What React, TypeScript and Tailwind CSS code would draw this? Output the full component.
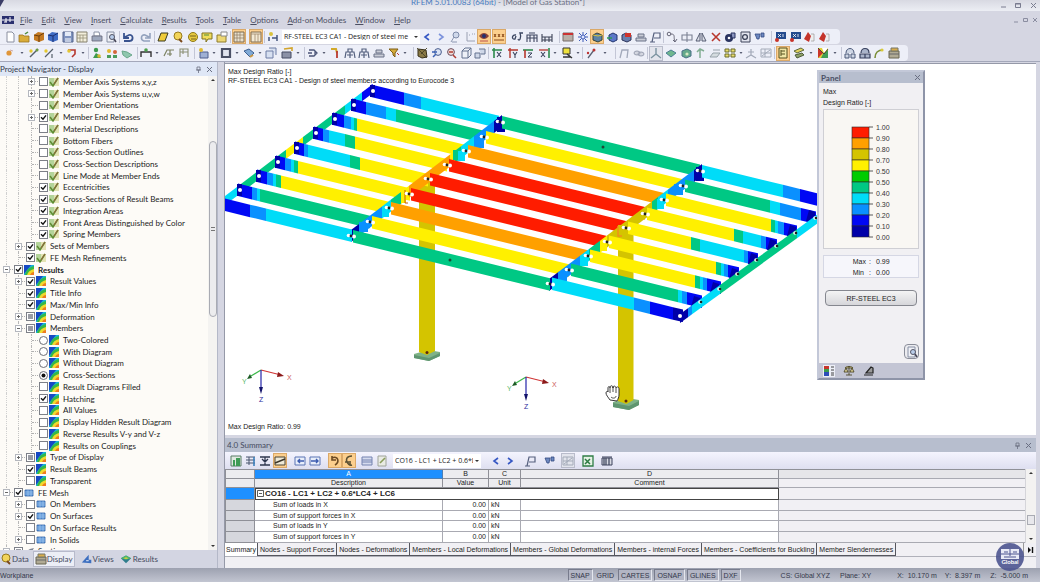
import React from "react";

type Kids = { children?: React.ReactNode };

/* ---------- toolbar glyphs, drawn on a 14 x 14 grid ---------- */

const glyphs: Record<string, React.ReactNode> = {
  doc: <path d="M4 2h5l2 2v8H4z" fill="#fff" stroke="#8a8fa0" />,
  open: <><path d="M2 5h4l1 1h5v6H2z" fill="#d9ac3a" stroke="#9a7420" strokeWidth=".8" /><path d="M8 4l3-2" stroke="#4d8c3c" strokeWidth="1.5" /></>,
  boxO: <><path d="M2 5l4-3 6 1v7l-5 2-5-2z" fill="#c47a22" /><path d="M2 5l5 1v6M7 6l5-3" stroke="#6d3d0c" fill="none" /></>,
  boxB: <><path d="M2 5l4-3 6 1v7l-5 2-5-2z" fill="#3f6cc4" /><path d="M2 5l5 1v6M7 6l5-3" stroke="#1b2f70" fill="none" /></>,
  save: <><path d="M2 2h10v10H2z" fill="#7f93bf" stroke="#56658c" /><path d="M4 2h6v4H4z" fill="#e4eaf6" /><path d="M4 8h6v4H4z" fill="#c0cae0" /></>,
  table: <><path d="M2 2h10v10H2z" fill="#f3efdc" stroke="#85806c" /><path d="M2 5h10M5 5v7M8 5v7M2 8h10" stroke="#98927a" strokeWidth=".8" /></>,
  print: <><path d="M4 2h5l1 4H4z" fill="#fff" stroke="#8890a4" /><path d="M2 6h10v5H2z" fill="#9ea8bd" stroke="#667" strokeWidth=".8" /></>,
  preview: <><path d="M3 2h7v10H3z" fill="#eef0f6" stroke="#8890a4" /><circle cx="8" cy="7" r="2.5" fill="#b9cdea" stroke="#556" /><path d="M10 9l2 3" stroke="#445" strokeWidth="1.5" /></>,
  undo: <path d="M3 11h6c4-1 3-7-1-6L4 7M3 3v5h5" fill="none" stroke="#39538f" strokeWidth="1.8" />,
  redo: <path d="M11 11H5c-4-1-3-7 1-6l4 2M11 3v5H6" fill="none" stroke="#93a2bd" strokeWidth="1.6" />,
  para: <path d="M5 3h7l-3 8H2z" fill="#efcb3a" stroke="#3a3a20" />,
  bubble: <><circle cx="7" cy="6" r="4" fill="#f2d45a" stroke="#977a1d" /><path d="M8 9l3 3" stroke="#7b4a1d" strokeWidth="2" /></>,
  globe: <><circle cx="7" cy="7" r="4.5" fill="#e7c93f" stroke="#8f7a18" /><path d="M4 6h6M5 9h5" stroke="#76631a" /></>,
  note: <><path d="M2 3h10v6H8l-2 3V9H2z" fill="#f0dc5c" stroke="#7e7220" /><path d="M4 5h5" stroke="#4e8a3a" /></>,
  folder: <><path d="M2 5h9v7H2z" fill="#edd774" stroke="#8e7d2c" /><path d="M6 2h6v4H6z" fill="#fff" stroke="#888" /></>,
  grid: <><path d="M2 2h10v10H2z" fill="#e9e2d0" stroke="#7f6a4f" /><path d="M5 2v10M8 2v10M2 5h10M2 8h10" stroke="#8f7a60" strokeWidth=".7" /></>,
  cols: <><path d="M2 2h10v10H2z" fill="#f3ead4" stroke="#7f6a4f" /><path d="M2 4h10M6 4v8M9 4v8" stroke="#a0896a" strokeWidth=".8" /></>,
  steps: <><circle cx="5" cy="4" r="2" fill="#d8c23c" /><path d="M3 7v4M6 8h5M11 5v6" stroke="#43557d" strokeWidth="1.5" /></>,
  back: <path d="M9 4L5 7l4 3" fill="none" stroke="#3557c4" strokeWidth="1.6" />,
  fwd: <path d="M5 4l4 3-4 3" fill="none" stroke="#7d93dc" strokeWidth="1.6" />,
  fwdD: <path d="M5 4l4 3-4 3" fill="none" stroke="#3557c4" strokeWidth="1.6" />,
  lens: <><circle cx="8" cy="5" r="3" fill="#cfd8ea" stroke="#7d8aa8" /><path d="M3 12l3-5M4 12h5" stroke="#8b96b0" /></>,
  axis: <path d="M4 2v9h8M6 5h1M9 4h1M11 4h1" fill="none" stroke="#9aa0b2" />,
  eye: <><path d="M2 6c3-4 7-4 10 0-3 4-7 4-10 0z" fill="#8b4438" /><circle cx="7" cy="6" r="2" fill="#25316f" /><path d="M3 11h8" stroke="#b55" /></>,
  xxx: <path d="M2 4l2 3M4 4L2 7M6 4l2 3M8 4L6 7M10 4l2 3M12 4l-2 3M2 10h10" stroke="#8a4a1a" />,
  wave: <path d="M6 5c-4-1-5 5-1 4l1-3M8 9c1 3 4-1 2-6h3" fill="none" stroke="#3a4560" strokeWidth="1.3" />,
  frame: <path d="M2 12V5h10v7M2 8h10M5 5v7M9 5v7M4 3h6" fill="none" stroke="#3e4660" strokeWidth="1.1" />,
  rail: <path d="M2 12V4M12 12V4M2 7h10M2 10h10M5 7v5M9 7v5" fill="none" stroke="#3c4256" strokeWidth="1.1" />,
  chipR: <><path d="M2 3h10v8H2z" fill="#b9b0a8" stroke="#776f6a" /><path d="M2 4h10" stroke="#c33" strokeWidth="2" /></>,
  burst: <><path d="M7 2v10M2 7h10M3 3l8 8M11 3l-8 8" stroke="#3c5ab8" /><circle cx="7" cy="7" r="2" fill="#dfe6ff" stroke="#4b66bd" /></>,
  cubeG: <><path d="M3 5l4-2 5 2v5l-4 2-5-2z" fill="#5d83a6" stroke="#34423a" /><path d="M3 5l5 1 4-1" stroke="#d7c33c" fill="none" /></>,
  cubeB: <><path d="M4 5l4-2 4 2v5l-4 2-4-2z" fill="#5b78c8" stroke="#22346e" /><path d="M2 8h5" stroke="#2b9b54" strokeWidth="1.5" /></>,
  cubeR: <><path d="M3 5l4-2 5 2v5l-4 2-5-2z" fill="#6a7fae" stroke="#2c345c" /><path d="M6 3h6v4H6z" fill="#d0342c" /></>,
  stack: <path d="M4 4h6v3H4zM2 8h10v3H2z" fill="#c9ccd6" stroke="#6b7288" />,
  flag: <path d="M4 12L6 3h6v5H6M2 12h5" fill="none" stroke="#56607e" strokeWidth="1.2" />,
  link: <><circle cx="4" cy="4" r="1.8" fill="none" stroke="#667" /><path d="M6 4c5 0 2 4 4 7M8 10l2 2 2-3" stroke="#667" fill="none" /></>,
  phi: <path d="M2 5h10v5H2zM7 2v10" fill="none" stroke="#7b8092" strokeWidth="1.1" />,
  mirror: <path d="M6 3L2 11h4zM8 3l4 8H8z" fill="#dcdfe8" stroke="#565d72" />,
  cross: <path d="M3 3l8 8M11 3l-8 8" stroke="#b8382e" strokeWidth="1.6" />,
  badge: <><circle cx="6" cy="8" r="4" fill="#2a3460" /><path d="M8 3h4v5H9z" fill="#8c96c0" stroke="#26305e" /><circle cx="6" cy="8" r="1.3" fill="#fff" /></>,
  doc2: <><path d="M3 2h9v10H3z" fill="#e2e4ee" stroke="#3c4258" /><circle cx="7" cy="7" r="2.4" fill="none" stroke="#3c4258" strokeWidth="1.3" /></>,
  plug: <><path d="M3 4h5l-1 5H5zM9 3h3v4H9z" fill="#6d88c0" stroke="#334a82" strokeWidth=".8" /></>,
  xyB: <><path d="M3 2h10v7H3z" fill="#234a8e" /><path d="M5 4l3 3M8 4L5 7M10 4v3" stroke="#fff" strokeWidth=".8" /><circle cx="4" cy="10" r="2" fill="#c8332b" /></>,
  runR: <><path d="M6 2l3 4-2 6-5-3z" fill="#c4332a" /><path d="M9 4h3v7H9" fill="#eee" stroke="#999" strokeWidth=".7" /></>,
  dotO: <><circle cx="6" cy="7" r="2.6" fill="#e0963a" /><path d="M7 4l3 1" stroke="#caa" /></>,
  line: <><path d="M3 11l8-8" stroke="#56606a" strokeWidth="1.5" /><circle cx="4" cy="5" r="1.7" fill="#e5c92f" /><circle cx="10" cy="4" r="1.5" fill="#6c9c40" /></>,
  lineI: <><path d="M3 11l8-8M10 8v4" stroke="#56606a" strokeWidth="1.2" /><circle cx="4" cy="5" r="1.7" fill="#e5c92f" /></>,
  shape: <><path d="M3 4h7v4l-3 3" fill="none" stroke="#b6382e" strokeWidth="1.6" /><circle cx="4" cy="5" r="1.8" fill="#e3c531" /></>,
  person: <><circle cx="6" cy="4" r="2.2" fill="#3d9a4e" /><path d="M3 12l3-5 3 2 2 3z" fill="#3d9a4e" /><circle cx="9" cy="10" r="1.8" fill="#d8b72f" /></>,
  nodes: <><path d="M2 9h4v3H2zM8 9h4v3H8z" fill="#4b9b5b" /><circle cx="4" cy="5" r="2" fill="#e3b92f" /><circle cx="10" cy="6" r="2" fill="#d4653a" /></>,
  leaf: <path d="M2 5l5 1 5 3-5 3-4-3z" fill="#8fc7ae" stroke="#6ba88c" />,
  span: <><path d="M2 11V6h10v5" fill="none" stroke="#333" strokeWidth="1.4" /><circle cx="7" cy="4" r="1.8" fill="#4da04c" /></>,
  dim: <path d="M2 10l3-6h7M5 8h5M8 4v6" fill="none" stroke="#7d8262" strokeWidth="1.2" />,
  wrap: <path d="M3 11V3h8v8M3 6h8M6 3v5" fill="none" stroke="#8c8f74" strokeWidth="1.1" />,
  load: <><path d="M4 6h8v6H4z" fill="#9fb0d4" stroke="#4f5f8d" /><circle cx="5" cy="4" r="2" fill="#e0bc36" /></>,
  hole: <path d="M3 3h8v8H3z" fill="#dfe3ee" stroke="#4a5066" strokeWidth="2.2" />,
  diamond: <><path d="M2 5l5-2 5 4-4 4z" fill="#7fa9d6" stroke="#3d5f90" /><path d="M8 11l3-2" stroke="#c94" strokeWidth="2" /></>,
  copy: <path d="M2 5h7v7H2zM5 2h7v7" fill="#d7e0f1" stroke="#6c7da5" />,
  clap: <><path d="M2 6h9v6H2z" fill="#8b91a6" stroke="#444b63" /><path d="M4 3l8-1v3" stroke="#d2a52d" fill="none" strokeWidth="1.6" /></>,
  gate: <path d="M3 4h5l3 3-3 3H3M2 7h4M9 5v4" fill="none" stroke="#4c5678" strokeWidth="1.3" />,
  pinR: <><path d="M3 3h5l1 4" fill="none" stroke="#d2a92a" strokeWidth="2" /><path d="M9 5v7" stroke="#b8392f" strokeWidth="1.8" /></>,
  tower: <path d="M2 12l1-6h8l1 6M4 9h6M5 6V3h4v3M7 6v6" fill="none" stroke="#54607e" strokeWidth="1.2" />,
  filter: <><path d="M2 3h9L8 7v4L6 9V7z" fill="#d4ab3a" stroke="#7d5c14" /><path d="M10 7l2 2" stroke="#b33" /></>,
  rock: <><path d="M3 3l8 1 1 7-5 1-4-2z" fill="#8a7a45" stroke="#39311b" /><path d="M2 2l10 10M12 2L6 8" stroke="#4a4226" strokeWidth=".9" /></>,
  zin: <><circle cx="8" cy="6" r="3.4" fill="#dbe4f5" stroke="#4a5c8c" /><path d="M2 6h5M3 11l3-3" stroke="#3b62b5" strokeWidth="1.5" /></>,
  zout: <><circle cx="7" cy="6" r="3.4" fill="#f2dcd9" stroke="#6b4c5c" /><path d="M9 9l3 3M5 6h4" stroke="#b33c32" strokeWidth="1.5" /></>,
  cube: <path d="M3 5l3-3h6v7l-3 3H3zM3 5h6v7M9 5l3-3" fill="#eef1f8" stroke="#65728f" />,
  cubes: <path d="M2 7h5v5H2zM6 3h6v5H8" fill="#cfd7e8" stroke="#65728f" />,
  axX: <><path d="M2 4h10M4 2v10" stroke="#2c8a4b" strokeWidth="1.6" /><path d="M7 6l4 5M11 6l-4 5" stroke="#39415c" strokeWidth="1.1" /></>,
  axY: <><path d="M2 4h10M4 2v10" stroke="#b4372d" strokeWidth="1.4" /><path d="M7 6l2 3 2-3M9 9v3" stroke="#39415c" fill="none" strokeWidth="1.1" /></>,
  axZ: <><path d="M2 4h10" stroke="#2c8a4b" strokeWidth="1.6" /><path d="M4 4v8" stroke="#b4372d" strokeWidth="1.6" /><path d="M7 7h4l-4 4h4" stroke="#39415c" fill="none" /></>,
  axN: <><path d="M12 2v10" stroke="#2c8a4b" strokeWidth="1.6" /><path d="M2 4h9" stroke="#b4372d" strokeWidth="1.3" /><path d="M4 6l4 5M8 6l-4 5" stroke="#39415c" strokeWidth="1.1" /></>,
  target: <><path d="M3 2h7v6H3z" fill="#efe23c" stroke="#333" /><path d="M7 8l5 4M3 11h8" stroke="#333" strokeWidth="1.5" /></>,
  pick: <><path d="M4 12l6-8" stroke="#5a6072" strokeWidth="1.3" /><circle cx="10" cy="4" r="1.5" fill="#b33" /><circle cx="4" cy="7" r="1.2" fill="#b33" /></>,
  bend: <path d="M3 12l2-8h6l-1 8" fill="none" stroke="#a2a9ba" strokeWidth="1.3" />,
  ovals: <path d="M2 7a3 2 0 1 0 6 0a3 2 0 1 0-6 0M6 8a3 2 0 1 0 6 0a3 2 0 1 0-6 0" fill="#d3d6e0" stroke="#9aa0b2" />,
  tri: <path d="M7 2v6M7 8l-5 4M7 8l5 4" fill="none" stroke="#7b93a0" strokeWidth="1.4" />,
  surf: <path d="M2 7l5-3 5 3-5 4z" fill="#6fb78e" stroke="#4b7f93" />,
  solid: <><path d="M3 5l5-2 4 2v5l-5 2-4-2z" fill="#65a98b" stroke="#496f86" /><circle cx="8" cy="8" r="1.6" fill="#d7e9c4" /></>,
  up: <path d="M7 12V3M4 6l3-3 4 2" fill="none" stroke="#82ae93" strokeWidth="1.5" />,
  skew: <path d="M2 11l3-4h7l-3 4zM5 4h7" fill="#d5dce0" stroke="#97a2aa" />,
  quad: <path d="M2 3h4v3H2zM8 3h4v3H8zM2 8h4v3H2zM8 8h4v3H8z" fill="#e8dc6c" stroke="#6d6c2c" />,
  stand: <path d="M7 3v6M2 12l5-3 5 3M4 6h6" fill="none" stroke="#a2a9b8" strokeWidth="1.2" />,
  net: <path d="M2 3h10v8H2zM2 7h10M6 3v8M3 10l8-6" fill="none" stroke="#a4abb9" />,
  panel: <><path d="M3 2h8v10H3z" fill="#efe6a6" stroke="#54511e" /><path d="M5 4v6M5 5h4M5 8h4" stroke="#54511e" /></>,
  pens: <><path d="M2 5l7-3 3 2-7 3z" fill="#e3d45e" stroke="#5e6a3c" /><path d="M3 9l7-2 2 2-7 3z" fill="#8fa268" stroke="#4d5b3a" /></>,
  heat: <><path d="M2 2h10v10H2z" fill="#e2d23a" /><path d="M2 2l5 5-5 5z" fill="#c9362a" /><path d="M7 8l5-4v8H5z" fill="#3f9d55" /><path d="M6 2h6L8 7z" fill="#fff" /><path d="M2 2l6 6 4-5" stroke="#333" strokeWidth=".8" fill="none" /></>,
  dome: <path d="M3 7c0-6 8-6 8 0M2 8h4v4H2zM8 8h4v4H8z" fill="#cdd5e4" stroke="#4a5878" />,
  domeB: <path d="M3 7c0-6 8-6 8 0M2 8h10v4H2zM7 8v4" fill="#aab4ca" stroke="#363f5c" strokeWidth="1.2" />,
  arc: <><path d="M3 12c0-5 3-8 8-8" fill="none" stroke="#7b8f3a" strokeWidth="1.6" /><circle cx="10" cy="4" r="1.6" fill="#d8ca3b" /></>,
  chest: <><path d="M2 5h10v7H2z" fill="#b0aa94" stroke="#6a6650" /><path d="M4 2h7v3H4z" fill="#d8ad4c" stroke="#776" /><path d="M2 8h10" stroke="#666" /></>,
  sheetG: <><path d="M2 2h10v10H2z" fill="#dfe9e0" stroke="#5b7d66" /><path d="M4 12V6h2v6M7 12V4h4v8z" fill="#3f9b56" /></>,
  tableI: <><path d="M2 3h9M2 6h9M2 9h9M5 3v8" stroke="#49546e" /><path d="M10 3v9" stroke="#3b7fbb" strokeWidth="1.6" /></>,
  sumI: <path d="M2 3h10M2 11h10M7 3v8M4 5l3 3 3-3" fill="none" stroke="#2e374e" strokeWidth="1.3" />,
  slope: <><path d="M2 3h10v8H2z" fill="#eee9d6" stroke="#4a4436" /><path d="M2 9l10-4" stroke="#3a3428" strokeWidth="1.4" /></>,
  colL: <><path d="M2 3h10v8H2z" fill="#e8eefa" stroke="#5a74b4" /><path d="M11 7H5M7 5L5 7l2 2" stroke="#3b5bb0" fill="none" strokeWidth="1.4" /></>,
  colR: <><path d="M2 3h10v8H2z" fill="#e8eefa" stroke="#5a74b4" /><path d="M3 7h7M8 5l2 2-2 2" stroke="#3b5bb0" fill="none" strokeWidth="1.4" /></>,
  hook: <path d="M4 4c6-3 8 4 3 7M4 2v4h4" fill="none" stroke="#6c4a22" strokeWidth="1.6" />,
  hook2: <path d="M10 2c-6 0-6 4-5 6s2 4 5 3M3 8h4M8 7v4" fill="none" stroke="#5a5033" strokeWidth="1.6" />,
  list: <path d="M2 3h10v8H2zM2 6h10M2 8h10" fill="#d5dbee" stroke="#7583b0" />,
  edit: <><path d="M3 2h8v10H3z" fill="#e9ebe4" stroke="#9fa49a" /><path d="M5 9l5-5" stroke="#8a9c5c" strokeWidth="1.6" /></>,
  excel: <><path d="M2 2h10v10H2z" fill="#e4f1e4" stroke="#2f7d46" strokeWidth="1.3" /><path d="M4 5l5 5M9 5l-5 5" stroke="#2c7a42" strokeWidth="1.5" /></>,
  bars: <><path d="M2 4h10v7H2z" fill="#d7d9e2" stroke="#3c435c" /><path d="M4 4v7M6 4v7M9 4v7M2 3h10" stroke="#3c435c" strokeWidth="1.2" /></>,
};

function Glyph({ id }: { id: string }) {
  return (
    <svg viewBox="1 1 12 12" className="size-3 shrink-0" aria-hidden="true">
      {glyphs[id]}
    </svg>
  );
}

function Tool({ id }: { id: string }) {
  if (id === "v") {
    return (
      <svg viewBox="0 0 6 4" className="h-1 w-1.5" aria-hidden="true">
        <path d="M1.5 1h3L3 3z" fill="#555a70" />
      </svg>
    );
  }
  const on = id.startsWith("*");
  const dim = id.startsWith("~");
  const name = on || dim ? id.slice(1) : id;
  return (
    <button
      aria-label={name}
      className={
        on
          ? "flex h-[15px] w-3.5 items-center justify-center border border-[#dba968] bg-[#fccf8d]"
          : dim
            ? "flex h-[15px] w-3.5 items-center justify-center border border-[#b9bccb] bg-[#e2e4ec]"
            : "flex h-[15px] w-3.5 items-center justify-center"
      }
    >
      <Glyph id={name} />
    </button>
  );
}

function Group({ w, items }: { w: string; items: string }) {
  return (
    <div className={`flex shrink-0 items-center justify-between ${w}`}>
      {items.split(" ").map((id, i) => (
        <Tool key={i} id={id} />
      ))}
    </div>
  );
}

const Sep = () => <span className="mx-px h-3 w-px shrink-0 bg-[#c3c6d6]" />;

/* ---------- navigator tree ---------- */

type Mark = "on" | "off" | "mix" | "radio" | "radioOn";
type Row = { t: string; l: 1 | 2 | 3; m: Mark; i: "pen" | "res" | "mesh" | "cut"; x?: "+" | "-" };

const r = (l: 1 | 2 | 3, t: string, m: Mark, i: Row["i"], x?: "+" | "-"): Row => ({ t, l, m, i, x });

const rows: Row[] = [
  r(3, "Member Axis Systems x,y,z", "off", "pen", "+"),
  r(3, "Member Axis Systems u,v,w", "off", "pen", "+"),
  r(3, "Member Orientations", "off", "pen"),
  r(3, "Member End Releases", "on", "pen", "+"),
  r(3, "Material Descriptions", "off", "pen"),
  r(3, "Bottom Fibers", "off", "pen"),
  r(3, "Cross-Section Outlines", "off", "pen"),
  r(3, "Cross-Section Descriptions", "off", "pen"),
  r(3, "Line Mode at Member Ends", "off", "pen"),
  r(3, "Eccentricities", "on", "pen"),
  r(3, "Cross-Sections of Result Beams", "on", "pen"),
  r(3, "Integration Areas", "on", "pen"),
  r(3, "Front Areas Distinguished by Color", "on", "pen"),
  r(3, "Spring Members", "on", "pen"),
  r(2, "Sets of Members", "on", "pen", "+"),
  r(2, "FE Mesh Refinements", "on", "pen"),
  r(1, "Results", "on", "res", "-"),
  r(2, "Result Values", "on", "res", "+"),
  r(2, "Title Info", "on", "res"),
  r(2, "Max/Min Info", "on", "res"),
  r(2, "Deformation", "mix", "res", "+"),
  r(2, "Members", "mix", "res", "-"),
  r(3, "Two-Colored", "radio", "res"),
  r(3, "With Diagram", "radio", "res"),
  r(3, "Without Diagram", "radio", "res"),
  r(3, "Cross-Sections", "radioOn", "res"),
  r(3, "Result Diagrams Filled", "off", "res"),
  r(3, "Hatching", "on", "res"),
  r(3, "All Values", "off", "res"),
  r(3, "Display Hidden Result Diagram", "off", "res"),
  r(3, "Reverse Results V-y and V-z", "off", "res"),
  r(3, "Results on Couplings", "off", "res"),
  r(2, "Type of Display", "mix", "res", "+"),
  r(2, "Result Beams", "on", "res"),
  r(2, "Transparent", "off", "res"),
  r(1, "FE Mesh", "on", "mesh", "-"),
  r(2, "On Members", "off", "mesh", "+"),
  r(2, "On Surfaces", "on", "mesh", "+"),
  r(2, "On Surface Results", "off", "mesh"),
  r(2, "In Solids", "off", "mesh", "+"),
  r(1, "Sections", "mix", "cut", "-"),
];

function TreeIcon({ kind }: { kind: Row["i"] }) {
  return (
    <svg viewBox="0 0 10 10" className="size-2.5 shrink-0" aria-hidden="true">
      {kind === "pen" && (
        <>
          <path d="M0 1h5v8H0z" fill="#b4d49a" />
          <path d="M5 1h5v8H5z" fill="#e3e3b4" />
          <path d="M1 5l3 4L9 1" fill="none" stroke="#5f8c34" strokeWidth="1.5" />
          <path d="M5 7l4-6" stroke="#8c6a3a" strokeWidth="1.2" />
        </>
      )}
      {kind === "res" && (
        <>
          <path d="M0 0h10v10H0z" fill="#14b4dc" />
          <path d="M0 0h7L0 9z" fill="#1749c4" />
          <path d="M10 1v9H1C2 5 5 2 10 1z" fill="#35b848" />
          <path d="M10 4v6H3c1-3 3-5 7-6z" fill="#f0d92e" />
          <path d="M10 7v3H6c1-2 2-3 4-3z" fill="#ee7a20" />
        </>
      )}
      {kind === "mesh" && (
        <>
          <path d="M1 2h8v6H1z" fill="#5a95da" stroke="#3465a8" strokeWidth=".8" />
          <path d="M1 4h8M1 6h8M4 2v6M7 2v6" stroke="#b9d5f2" strokeWidth=".5" />
        </>
      )}
      {kind === "cut" && <path d="M1 6l5-3 4-1-3 5-5 1z" fill="#7c8494" />}
    </svg>
  );
}

function Box({ mark, id }: { mark: Mark; id: string }) {
  const radio = mark === "radio" || mark === "radioOn";
  return (
    <span className="relative flex size-[9px] shrink-0">
      <input
        id={id}
        type={radio ? "radio" : "checkbox"}
        name={radio ? "member-style" : undefined}
        defaultChecked={mark === "on" || mark === "radioOn"}
        className={
          radio
            ? "size-[9px] appearance-none rounded-full border border-[#6d7078] bg-white"
            : "size-[9px] appearance-none border border-[#7d8088] bg-white"
        }
      />
      <svg viewBox="0 0 9 9" className="pointer-events-none absolute inset-0" aria-hidden="true">
        {mark === "on" && <path d="M2 4.3l2 2L7 2.4" fill="none" stroke="#111" strokeWidth="1.4" />}
        {mark === "mix" && <path d="M2 2h5v5H2z" fill="#9a9ca4" />}
        {mark === "radioOn" && <circle cx="4.5" cy="4.5" r="2" fill="#111" />}
      </svg>
    </span>
  );
}

function TreeRow({ row, n }: { row: Row; n: number }) {
  return (
    <li className="flex min-h-0 flex-1 items-center pl-1.5">
      {row.l > 1 && <span className="w-3 shrink-0 self-stretch border-l border-dotted border-[#d0d0d0]" />}
      {row.l > 2 && <span className="w-[13px] shrink-0 self-stretch border-l border-dotted border-[#c4c4c4]" />}
      <span className="relative flex w-2 shrink-0 items-center self-stretch border-l border-dotted border-[#b8b8b8]">
        <span className="w-1.5 border-t border-dotted border-[#b0b0b0]" />
        {row.x && (
          <button
            aria-label={row.x === "+" ? "Expand" : "Collapse"}
            className="absolute -left-1 flex size-[7px] items-center justify-center border border-[#b4b7be] bg-white"
          >
            <svg viewBox="0 0 5 5" className="size-[5px]" aria-hidden="true">
              <path d={row.x === "+" ? "M1 2.5h3M2.5 1v3" : "M1 2.5h3"} stroke="#666" strokeWidth="1" />
            </svg>
          </button>
        )}
      </span>
      <Box mark={row.m} id={`node-${n}`} />
      <span className="ml-px flex shrink-0"><TreeIcon kind={row.i} /></span>
      <label
        htmlFor={`node-${n}`}
        className={row.t === "Results" ? "ml-1 whitespace-nowrap font-bold leading-none" : "ml-1 whitespace-nowrap leading-none"}
      >
        {row.t}
      </label>
    </li>
  );
}

function Navigator() {
  return (
    <aside className="flex w-[218px] shrink-0 flex-col border-r border-[#b4b8c8] bg-[#fdfbf7]">
      <header className="flex h-3.5 shrink-0 items-center justify-between bg-[#dfe7f6] pr-1 text-[#33384a]">
        <h2>Project Navigator - Display</h2>
        <span className="flex gap-1"><Pin /><Close /></span>
      </header>
      <div className="flex min-h-0 flex-1">
        <div className="min-w-0 flex-1 overflow-hidden">
          <ul className="flex h-[481px] flex-col text-[#1c1c1c]">
            {rows.map((row, i) => <TreeRow key={i} row={row} n={i} />)}
          </ul>
        </div>
        <div className="flex w-[9px] flex-col items-center bg-[#f4f3f1]">
          <Arrow up />
          <div className="mt-[57px] flex h-[176px] w-2 items-center justify-center rounded-sm border border-[#a9abb3] bg-[#ececee]">
            <span className="h-1 w-1 border-y border-[#777]" />
          </div>
          <div className="mt-auto"><Arrow /></div>
        </div>
      </div>
      <nav className="flex h-[18px] shrink-0 items-center bg-[#d3d5e2] text-[#454a60]">
        <a href="#data" className="flex items-center"><Glyph id="bubble" />Data</a>
        <a href="#display" className="ml-1 flex h-4 items-center border border-[#b7bacb] bg-[#eceef6] px-px"><Glyph id="chest" />Display</a>
        <a href="#views" className="ml-1.5 flex items-center">
          <svg viewBox="0 0 14 14" className="size-3" aria-hidden="true"><path d="M1 11l8-9v6h3v4z" fill="#3d6fc0" /><path d="M6 9h3" stroke="#fff" /></svg>
          Views
        </a>
        <a href="#results" className="ml-1.5 flex items-center gap-px">
          <svg viewBox="0 0 14 14" className="size-3" aria-hidden="true"><path d="M1 6l6-3 6 3-6 6z" fill="#2f7d8c" /><path d="M1 6l6-3 6 3-6 2z" fill="#4db86a" /><path d="M4 6l3-1 3 1-3 1z" fill="#e0cf3d" /></svg>
          Results
        </a>
      </nav>
    </aside>
  );
}

const Close = () => (
  <svg viewBox="0 0 7 7" className="size-[7px]" aria-hidden="true"><path d="M1 1l5 5M6 1L1 6" stroke="#6a6f82" /></svg>
);
const Pin = () => (
  <svg viewBox="0 0 7 7" className="size-[7px]" aria-hidden="true"><path d="M2 1h3v3H2zM1 4h5M3.5 4v3" stroke="#6a6f82" fill="none" strokeWidth=".8" /></svg>
);
const Arrow = ({ up }: { up?: boolean }) => (
  <svg viewBox="0 0 8 8" className="size-2 shrink-0" aria-hidden="true"><path d={up ? "M2 5h4L4 3z" : "M2 3h4L4 5z"} fill="#333" /></svg>
);

const WindowButtons = () => (
  <svg viewBox="0 0 40 8" className="h-2 w-10" aria-hidden="true">
    <path d="M3 6h5M17.5 2.500h5v4h-5zM17 3h6M33 2l5 5M38 2l-5 5" fill="none" stroke="#7a7d90" />
  </svg>
);
const ChildButtons = () => (
  <svg viewBox="0 0 28 8" className="h-2 w-7" aria-hidden="true">
    <path d="M2 6h4M11.500 2.500h4v3h-4zM21 2l4 4M25 2l-4 4" fill="none" stroke="#8a8da0" />
  </svg>
);

/* ---------- structural model ---------- */

const N = "#0000a8", B = "#0008f4", L = "#0a90ff", C = "#00dcf8", G = "#00c884", Y = "#fff000", D = "#d4c400", O = "#ffa000", R = "#ff1c00";
const SLOPE = 0.245;

type Beam = { x: number; y: number; s: [number, string][] };
const beams = (list: Beam[]) =>
  list.map((b, k) => {
    let from = b.x;
    return (
      <g key={k}>
        {b.s.map(([to, fill], j) => {
          const a = b.y + (from - b.x) * SLOPE;
          const z = b.y + (to - b.x) * SLOPE;
          const pts = `${from},${a - 6.5} ${to},${z - 6.5} ${to},${z + 6} ${from},${a + 6}`;
          from = to;
          return <polygon key={j} points={pts} fill={fill} />;
        })}
      </g>
    );
  });

const leftSpan: Beam[] = [
  { x: 371, y: 91, s: [[404, B], [421, L], [499, C]] },
  { x: 352, y: 105, s: [[366, B], [386, L], [396, C], [482, G]] },
  { x: 333, y: 119, s: [[344, B], [351, L], [354, C], [357, G], [465, Y]] },
  { x: 314, y: 133, s: [[323, B], [329, L], [345, C], [355, G], [447, Y]] },
  { x: 295, y: 148, s: [[304, B], [308, L], [350, C], [360, G], [428, Y]] },
  { x: 276, y: 162, s: [[285, B], [291, L], [294, C], [298, G], [410, Y]] },
  { x: 257, y: 176, s: [[267, B], [273, L], [276, C], [281, G], [389, Y]] },
  { x: 238, y: 190, s: [[252, B], [257, L], [260, C], [370, G]] },
  { x: 225, y: 205, s: [[250, B], [266, L], [352, C]] },
];
const midFill = [G, Y, O, R, R, R, O, Y, G];
const frame1: [number, number][] = [[500, 122], [484, 137], [466, 151], [447, 165], [428, 179], [409, 194], [389, 208], [370, 222], [351, 236]];
const frame2: [number, number][] = [[700, 171], [683, 186], [664, 200], [645, 214], [626, 228], [607, 242], [588, 256], [569, 270], [550, 284]];
const midSpan: Beam[] = frame1.map(([x, y], i) => ({ x: x + 2, y: y + 0.5, s: [[frame2[i][0], midFill[i]]] }));
const rightSpan: Beam[] = [
  { x: 702, y: 171.500, s: [[783, C], [800, L], [819, B]] },
  { x: 685, y: 186, s: [[770, G], [780, C], [801, L], [816, B]] },
  { x: 666, y: 200, s: [[771, Y], [775, G], [778, C], [784, L], [797, B]] },
  { x: 647, y: 214, s: [[734, Y], [743, G], [761, C], [766, L], [777, B]] },
  { x: 628, y: 228, s: [[691, Y], [700, G], [744, C], [748, L], [758, B]] },
  { x: 609, y: 242, s: [[716, Y], [721, G], [724, C], [728, L], [739, B]] },
  { x: 590, y: 256, s: [[695, Y], [700, G], [703, C], [707, L], [721, B]] },
  { x: 571, y: 270, s: [[678, G], [682, C], [687, L], [702, B]] },
  { x: 552, y: 284, s: [[634, C], [650, L], [673, B], [683, N]] },
];

type Chord = { from: [number, number]; to: [number, number]; up: number; down: number; s: [number, string][] };
function ChordShape({ from, to, up, down, s }: Chord) {
  const k = (to[1] - from[1]) / (to[0] - from[0]);
  const at = (x: number) => from[1] + (x - from[0]) * k;
  let a = from[0];
  return (
    <g>
      {s.map(([b, fill], i) => {
        const pts = `${a},${at(a) - up} ${b},${at(b) - up} ${b},${at(b) + down} ${a},${at(a) + down}`;
        a = b;
        return <polygon key={i} points={pts} fill={fill} />;
      })}
    </g>
  );
}

function Release({ x, y }: { x: number; y: number }) {
  return (
    <g>
      <circle cx={x - 2.500} cy={y - 0.500} r="1.800" fill="#fff" />
      <circle cx={x + 3} cy={y + 0.500} r="2" fill="#fff" />
      <circle cx={x} cy={y} r="1.400" fill="#222" />
    </g>
  );
}

function Axes({ x, y }: { x: number; y: number }) {
  return (
    <g fontFamily="Liberation Sans, sans-serif" fontSize="7" strokeWidth="1.2">
      <path d={`M${x} ${y}l18 4.500`} stroke="#d03434" />
      <path d={`M${x + 17} ${y + 2}l6 4-7 1z`} fill="#8c1a1a" />
      <path d={`M${x} ${y}l-10 6`} stroke="#3cb84a" />
      <path d={`M${x - 14} ${y + 9}l3-5 2 4z`} fill="#1b5c24" />
      <path d={`M${x} ${y}v18`} stroke="#2424a8" />
      <path d={`M${x - 2} ${y + 17}h4l-2 7z`} fill="#12126a" />
      <text x={x + 26} y={y + 10} fill="#cc5a5a">X</text>
      <text x={x - 19} y={y + 14} fill="#5ab868">Y</text>
      <text x={x - 2} y={y + 32} fill="#2c2c9c">Z</text>
    </g>
  );
}

function Model() {
  return (
    <svg viewBox="225 64 811 370" preserveAspectRatio="xMinYMin meet" className="size-full" role="img" aria-label="Steel frame coloured by design ratio">
      <path d="M414 354l14-4 12 2v4l-11 5-15-3z" fill="#7fb287" />
      <path d="M414 355l15 3 11-5v3l-11 5-15-3z" fill="#5f9570" />
      <path d="M613 402l14-4 12 2v5l-10 5-16-3z" fill="#7fb287" />
      <path d="M613 403l16 3 10-5v4l-10 5-16-3z" fill="#5f9570" />
      <path d="M419 180h16v171l-8 4-8-3z" fill={D} />
      <path d="M618 228h15.500v172l-7 4-8.500-3z" fill={D} />
      <circle cx="427" cy="352.500" r="1.500" fill="#5a2a10" />
      <circle cx="626" cy="401" r="1.500" fill="#5a2a10" />

      <ChordShape from={[225, 203]} to={[373, 91]} up={7} down={2} s={[[238, C], [286, G], [303, Y], [345, G], [362, C], [373, B]]} />
      {beams(leftSpan.slice(0, 8))}
      {[[371, 91], [352, 105], [333, 119], [314, 133], [295, 148], [276, 162], [257, 176], [238, 190]].map(([x, y]) => (
        <path key={x} d={`M${x - 1} ${y - 6}h5v12h-5z`} fill={N} />
      ))}

      <ChordShape from={[351, 235]} to={[502, 120]} up={5} down={7} s={[[359, N], [382, L], [391, C], [401, G], [409, Y], [450, O], [455, Y], [461, G], [474, C], [494, L], [502, N]]} />
      {beams(leftSpan.slice(8))}
      <path d="M497 117h8v15h-8z" fill={N} />
      <path d="M474 138h10v10h-10z" fill={L} />
      <path d="M453 150h5v10h-5z" fill={G} />
      <path d="M458 151h7v10h-7z" fill={C} />
      <path d="M402 194h4v9h-4z" fill={Y} />
      <path d="M382 206h7v11h-7z" fill={C} />
      <path d="M359 222h9v10h-9z" fill={L} />
      {beams(midSpan.slice(0, 8))}
      <path d="M405 190v13h3" stroke="#c85a10" fill="none" />

      <ChordShape from={[549, 284]} to={[702, 169]} up={5} down={7} s={[[559, N], [580, L], [589, C], [600, G], [607, Y], [652, D], [658, G], [668, C], [694, L], [702, N]]} />
      {beams(midSpan.slice(8))}
      <path d="M696 167h8v14h-8z" fill={N} />
      <path d="M674 184h9v11h-9z" fill={L} />
      <path d="M657 199h7v10h-7z" fill={C} />
      <path d="M618 225h15v13h-15z" fill={D} />
      <path d="M618 226v10h4" stroke="#f0901a" strokeWidth="1.500" fill="none" />
      <path d="M600 243h7v8h-7z" fill={Y} />
      <path d="M580 256h8v10h-8z" fill={C} />
      <path d="M558 272h9v9h-9z" fill={L} />
      {beams(rightSpan)}
      {[[801, 211], [782, 226], [762, 240], [743, 254], [724, 269], [705, 283], [686, 297]].map(([x, y]) => (
        <path key={x} d={`M${x + 8} ${y - 1}l6 2v6l-5 4-4-1z`} fill={N} />
      ))}
      <ChordShape from={[680, 318]} to={[818, 218]} up={4} down={5} s={[[688, N], [692, L], [720, C], [797, G], [818, C]]} />

      {frame1.map(([x, y]) => <Release key={x} x={x} y={y} />)}
      {frame2.map(([x, y]) => <Release key={x} x={x} y={y} />)}
      {[[373, 91], [354, 105], [335, 119], [316, 133], [297, 148], [278, 162], [259, 176], [240, 190], [680, 316]].map(([x, y]) => (
        <circle key={x} cx={x} cy={y} r="2" fill="#fff" />
      ))}
      {[[816, 218], [796, 233], [777, 246], [757, 260], [738, 274], [720, 289], [701, 302]].map(([x, y]) => (
        <g key={x}><circle cx={x - 1} cy={y} r="1.800" fill="#fff" /><circle cx={x} cy={y} r="1.300" fill="#222" /></g>
      ))}
      <circle cx="603" cy="147" r="1.500" fill="#1d4a36" />
      <circle cx="450" cy="260" r="1.500" fill="#1d4a36" />

      <Axes x={261} y={370} />
      <Axes x={526} y={377} />
      <path
        d="M610 400c-2-3-4-5-4-7s2-2 2-1v-4c0-2 2-2 2 0 0-3 3-3 3 0 0-3 3-2 3 0 1-2 3-1 3 1v6c0 2-1 4-2 6z"
        fill="#fff" stroke="#222" strokeWidth=".9"
      />
      <path d="M610 388v5M613 387v5M616 388v5M611 397c2 2 5 1 5-1" fill="none" stroke="#222" strokeWidth=".8" />
    </svg>
  );
}

/* ---------- floating colour panel ---------- */

const scale = [R, O, D, Y, "#00cc00", G, C, L, B, N];
const scaleLabels = ["1.00", "0.90", "0.80", "0.70", "0.50", "0.50", "0.40", "0.30", "0.20", "0.10", "0.00"];

function ColorPanel() {
  return (
    <section className="absolute right-[111px] top-1.5 flex h-[310px] w-[108px] flex-col border-2 border-[#c3c8d8] border-b-[#8e94a8] border-r-[#8e94a8] bg-[#f1f0f3] font-['Liberation_Sans',sans-serif] text-[7px] text-[#222]">
      <header className="flex h-[11px] shrink-0 items-center justify-between bg-[#b7bece] px-0.5">
        <h2 className="font-[Lato,sans-serif] text-[8px] font-bold text-[#4a5066]">Panel</h2>
        <Close />
      </header>
      <div className="flex flex-1 flex-col px-1 pt-0.5">
        <p className="h-[11px] pt-0.5 leading-[9px]">Max</p>
        <p className="h-[11px] pt-0.5 leading-[9px]">Design Ratio [-]</p>
        <div className="mt-0.5 flex h-[140px] justify-center border border-[#cfcfd4] bg-[#f9f7f3] pt-3">
          <svg viewBox="0 0 40 120" className="h-[120px] w-10" role="img" aria-label="Colour scale">
            {scale.map((fill, i) => (
              <rect key={i} x="1" y={5 + i * 11} width="17" height="11" fill={fill} stroke="#2a2a2a" strokeWidth=".6" />
            ))}
            {scaleLabels.map((t, i) => (
              <g key={i}>
                <path d={`M18 ${5 + i * 11}h4`} stroke="#333" strokeWidth=".8" />
                <text x="25" y={7.500 + i * 11} fontSize="7" fill="#333">{t}</text>
              </g>
            ))}
          </svg>
        </div>
        <dl className="mt-1.5 grid h-[23px] grid-cols-[42px_8px_1fr] content-center gap-y-0.5 border border-[#d5d7e4] bg-[#f6f6fb] leading-[9px]">
          <dt className="text-right">Max</dt><span className="text-center">:</span><dd className="pl-0.5">0.99</dd>
          <dt className="pr-0.5 text-right">Min</dt><span className="text-center">:</span><dd className="pl-0.5">0.00</dd>
        </dl>
        <button className="mx-0.5 mt-3 h-4 rounded-sm border border-[#85878f] bg-gradient-to-b from-[#f4f4f4] to-[#d6d6da]">RF-STEEL EC3</button>
        <button aria-label="Details" className="mb-1 ml-auto mt-auto flex size-[15px] items-center justify-center rounded-sm border border-[#8a8d99] bg-[#ececf0]">
          <Glyph id="preview" />
        </button>
      </div>
      <nav className="flex h-[15px] shrink-0 items-center gap-2 bg-[#c3c5d4] px-1">
        <button aria-label="Colour scale" className="bg-[#eceef6]">
          <svg viewBox="0 0 12 12" className="size-3" aria-hidden="true">
            <path d="M1 1h5v3H1z" fill="#c8352b" /><path d="M1 4h5v3H1z" fill="#3c9c4c" /><path d="M1 7h5v4H1z" fill="#2c4cb8" /><path d="M8 2h3M8 5h3M8 8h3M8 10h3" stroke="#444" />
          </svg>
        </button>
        <button aria-label="Factors">
          <svg viewBox="0 0 12 12" className="size-3" aria-hidden="true"><path d="M6 1v9M2 3h8M3 10h6M1 7l2-4 2 4zM7 7l2-4 2 4zM2 3c1-2 7-2 8 0" fill="#e8dc9c" stroke="#4c4626" strokeWidth=".9" /></svg>
        </button>
        <button aria-label="Filter">
          <svg viewBox="0 0 12 12" className="size-3" aria-hidden="true"><path d="M1 10h9M3 8l5-6 2 1v5z" fill="#999" stroke="#222" strokeWidth="1.200" /></svg>
        </button>
      </nav>
    </section>
  );
}

/* ---------- result table ---------- */

const resultRows = ["Sum of loads in X", "Sum of support forces in X", "Sum of loads in Y", "Sum of support forces in Y"];
const sheetTabs = [
  "Summary", "Nodes - Support Forces", "Nodes - Deformations", "Members - Local Deformations",
  "Members - Global Deformations", "Members - internal Forces", "Members - Coefficients for Buckling", "Member Slendernesses",
];

const Th = ({ children }: Kids) => <th className="border-b border-r border-[#8f9097] bg-[#ececef] font-normal">{children}</th>;

function Summary() {
  return (
    <section className="flex shrink-0 flex-col bg-[#f1f0f4]">
      <header className="flex h-3.5 items-center justify-between bg-[#b7bece] px-0.5 text-[#454b60]">
        <h2>4.0 Summary</h2>
        <span className="flex gap-1 pr-0.5"><Pin /><Close /></span>
      </header>
      <div className="flex h-[17px] items-center bg-gradient-to-b from-[#f4f4fe] to-[#dedff0] pl-1">
        <Group w="w-[58px]" items="sheetG tableI sumI *slope" />
        <span className="w-1.5" />
        <Group w="w-[29px]" items="colL colR" />
        <span className="w-1.5" />
        <Group w="w-[28px]" items="*hook *hook2" />
        <span className="w-1" />
        <Group w="w-[29px]" items="list edit" />
        <select aria-label="Load combination" className="ml-1 h-3.5 w-[80px] appearance-none bg-white pl-0.5 font-['Open_Sans',sans-serif] text-[7px] text-[#222]">
          <option>CO16 - LC1 + LC2 + 0.6*LC4 + LC6</option>
        </select>
        <span className="flex h-3.5 items-center bg-white"><Arrow /></span>
        <span className="w-2" />
        <Group w="w-[28px]" items="back fwdD" />
        <span className="w-1.5" />
        <Group w="w-[52px]" items="flag plug ~net" />
        <span className="w-1.5" />
        <Group w="w-[33px]" items="excel bars" />
      </div>
      <div className="flex font-['Liberation_Sans',sans-serif] text-[7px] leading-[8px] text-[#222]">
        <table className="h-[74px] flex-1 table-fixed border-separate border-spacing-0 border-l border-t border-[#8f9097]">
          <colgroup>
            <col className="w-[29px]" /><col className="w-[188px]" /><col className="w-[46px]" /><col className="w-8" /><col className="w-[258px]" /><col />
          </colgroup>
          <thead>
            <tr>
              <Th /><th className="border-b border-r border-[#4d7fb4] bg-[#1e90ff] font-normal text-white">A</th><Th>B</Th><Th>C</Th><Th>D</Th>
              <td className="border-b border-[#a9aab2] bg-[#e6e6e9]" />
            </tr>
            <tr><Th /><Th>Description</Th><Th>Value</Th><Th>Unit</Th><Th>Comment</Th><td className="border-b border-[#a9aab2]" /></tr>
          </thead>
          <tbody>
            <tr>
              <td className="border-b border-r border-[#8f9097] bg-[#1e90ff]" />
              <td colSpan={4} className="whitespace-nowrap border border-[#444] bg-white pl-px text-[8px] font-bold">
                <span className="flex items-center gap-px">
                  <svg viewBox="0 0 7 7" className="size-[7px]" aria-hidden="true"><path d="M.5.5h6v6h-6zM2 3.500h3" fill="none" stroke="#333" strokeWidth=".8" /></svg>
                  CO16 - LC1 + LC2 + 0.6*LC4 + LC6
                </span>
              </td>
              <td className="border-b border-[#a9aab2]" />
            </tr>
            {resultRows.map((t) => (
              <tr key={t}>
                <td className="border-b border-r border-[#8f9097] bg-[#d6d7dd]" />
                <td className="border-b border-r border-[#a9aab2] bg-white pl-[18px]">{t}</td>
                <td className="border-b border-r border-[#a9aab2] bg-white pr-0.5 text-right">0.00</td>
                <td className="border-b border-r border-[#a9aab2] bg-white pl-0.5">kN</td>
                <td className="border-b border-r border-[#a9aab2] bg-white" />
                <td className="border-b border-[#a9aab2]" />
              </tr>
            ))}
          </tbody>
        </table>
        <div className="flex w-[11px] flex-col items-center justify-between border-l border-[#d5d5da] bg-[#f3f2f1]">
          <Arrow up />
          <span className="mt-7 h-2.5 w-2 border border-[#a9abb3] bg-[#e8e8ec]" />
          <Arrow />
        </div>
      </div>
      <div className="flex h-3.5 items-start border-b border-[#b0b1ba] font-['Liberation_Sans',sans-serif] text-[7px] text-[#222]">
        {sheetTabs.map((t, i) => (
          <button
            key={t}
            className={i === 0
              ? "h-[13px] whitespace-nowrap border-r border-[#55565e] bg-white px-px"
              : "h-[13px] whitespace-nowrap border-b border-r border-[#55565e] px-0.5"}
          >
            {t}
          </button>
        ))}
        <span className="ml-auto flex h-full items-center border-l border-[#999] px-0.5">
          <svg viewBox="0 0 8 8" className="size-2" aria-hidden="true"><path d="M2 1v6l3-3z" fill="#111" /><path d="M6.500 1v6" stroke="#111" strokeWidth="1.400" /></svg>
        </span>
      </div>
      <div className="h-[11px]" />
    </section>
  );
}

/* ---------- window ---------- */

const menus = ["File", "Edit", "View", "Insert", "Calculate", "Results", "Tools", "Table", "Options", "Add-on Modules", "Window", "Help"];

export default function App() {
  return (
    <div className="relative flex h-screen flex-col overflow-hidden bg-[#d5d6e2] font-[Lato,sans-serif] text-[8px] leading-none">
      <header className="relative flex h-[11px] shrink-0 items-start justify-center bg-gradient-to-b from-[#d8d9e2] to-[#eceef4]">
        <svg viewBox="0 0 6 8" className="absolute left-0 top-0 h-2 w-1.5" aria-hidden="true"><path d="M0 0h4L0 7z" fill="#3b3d66" /></svg>
        <h1 className="-mt-0.5 mr-[44px] text-[8px] text-[#6c7084]"><span className="text-[#4a7cc0]">RFEM 5.01.0083 (64bit)</span> - [Model of Gas Station*]</h1>
        <div className="absolute right-0.5 top-px"><WindowButtons /></div>
      </header>

      <nav className="flex h-[18px] shrink-0 items-center pl-0.5 text-[#4c4f62]">
        <svg viewBox="0 0 12 10" className="h-2.5 w-3" aria-hidden="true">
          <path d="M0 1h12v8H0z" fill="#2a2f6e" /><path d="M0 5h12M4 3v4M8 2v5M2 7h3" stroke="#fff" />
        </svg>
        <ul className="ml-1.5 flex gap-[9px]">
          {menus.map((m) => (
            <li key={m}>
              <a href={`#${m}`} className="whitespace-nowrap"><span className="underline">{m[0]}</span>{m.slice(1)}</a>
            </li>
          ))}
        </ul>
        <div className="ml-auto"><ChildButtons /></div>
      </nav>

      <div className="flex h-[15px] w-[840px] shrink-0 items-center rounded-r-sm bg-[#edeff8] pl-[3px]">
        <Group w="w-[115px]" items="doc open boxO boxB save table print preview" />
        <Sep />
        <Group w="w-[32px]" items="undo redo" />
        <Sep />
        <Group w="w-[73px]" items="para bubble globe note folder" />
        <Sep />
        <Group w="w-[31px]" items="*grid *cols" />
        <Sep />
        <Group w="w-[14px]" items="steps" />
        <select aria-label="Design case" className="ml-0.5 h-3.5 w-[130px] appearance-none whitespace-nowrap bg-white pl-0.5 font-['Open_Sans',sans-serif] text-[7px] text-[#222]">
          <option>RF-STEEL EC3 CA1 - Design of steel me</option>
        </select>
        <span className="flex h-3.5 items-center bg-white"><Arrow /></span>
        <Group w="w-[28px]" items="back fwd" />
        <Group w="w-[58px]" items="lens axis *eye *xxx" />
        <span className="w-1" />
        <Group w="w-[44px]" items="wave frame rail" />
        <span className="w-1" /><Sep />
        <Group w="w-[101px]" items="chipR burst *cubeG cubeB cubeR stack flag" />
        <Sep />
        <Group w="w-[101px]" items="link phi mirror cross badge doc2 plug" />
        <span className="w-1" /><Sep />
        <Group w="w-[58px]" items="xyB xyB runR runR" />
      </div>
      <div className="mt-px flex h-4 w-[908px] shrink-0 items-center rounded-r-sm bg-[#edeff8] pl-[3px]">
        <Group w="w-[61px]" items="dotO v line lineI v" />
        <span className="w-px" />
        <Group w="w-[21px]" items="shape v" />
        <span className="w-px" /><Sep />
        <Group w="w-[44px]" items="person nodes leaf" />
        <span className="w-0.5" /><Sep />
        <Group w="w-[52px]" items="span v dim wrap" />
        <span className="w-0.5" /><Sep />
        <Group w="w-[105px]" items="load v hole v diamond v copy clap v" />
        <span className="w-0.5" /><Sep />
        <Group w="w-[102px]" items="gate v pinR tower tower stack filter v" />
        <span className="w-1" /><Sep />
        <Group w="w-[72px]" items="rock zin zout cube cubes" />
        <Sep />
        <Group w="w-[91px]" items="axX axY axZ axN v target v" />
        <Sep />
        <Group w="w-[24px]" items="pick v" />
        <span className="w-1.5" /><Sep />
        <Group w="w-[29px]" items="bend ovals" />
        <Sep />
        <Group w="w-[124px]" items="~tri surf solid up skew quad v stand net" />
        <Sep />
        <Group w="w-[62px]" items="*panel pens v heat v" />
        <span className="w-0.5" /><Sep />
        <Group w="w-[58px]" items="dome domeB arc chest" />
      </div>

      <div className="flex min-h-0 flex-1 border-t border-[#a4a8ba]">
        <Navigator />
        <main className="ml-1.5 flex min-w-0 flex-1 flex-col border-l border-[#9599a8] pr-1 pt-px">
          <div className="relative min-h-0 flex-1 border-t border-[#9599a8] bg-white font-['Liberation_Sans',sans-serif] text-[7px] text-[#222]">
            <Model />
            <div className="absolute left-[3px] top-[3px] leading-[9px]">
              <p>Max Design Ratio [-]</p>
              <p>RF-STEEL EC3 CA1 - Design of steel members according to Eurocode 3</p>
            </div>
            <p className="absolute bottom-1 left-[3px] leading-[8px]">Max Design Ratio: 0.99</p>
            <ColorPanel />
          </div>
          <div className="h-[3px] shrink-0" />
          <Summary />
        </main>
      </div>

      <footer className="flex h-3.5 shrink-0 items-center bg-gradient-to-b from-[#9da1b0] to-[#c2c5d1] pr-3 font-['Liberation_Sans',sans-serif] text-[7px] text-[#33374a]">
        <span>Workplane</span>
        <div className="ml-auto flex h-3 gap-0.5">
          {["SNAP", "GRID", "CARTES", "OSNAP", "GLINES", "DXF"].map((t) => (
            <button key={t} className={t === "GRID" ? "px-0.5" : "border border-[#777b8c] border-b-[#e5e7ee] border-r-[#e5e7ee] bg-[#b2b5c4] px-0.5"}>{t}</button>
          ))}
        </div>
        <span className="ml-10">CS: Global XYZ</span>
        <span className="ml-2.5">Plane: XY</span>
        <span className="ml-[26px]">X:&nbsp; 10.170 m</span>
        <span className="ml-2">Y:&nbsp; 8.397 m</span>
        <span className="ml-2.5">Z:&nbsp; -5.000 m</span>
      </footer>

      <div className="absolute bottom-[11px] right-4 flex size-7 flex-col items-center justify-center rounded-full bg-[#4d5490]/90 text-[6px] font-bold text-white">
        <svg viewBox="0 0 18 10" className="h-2.5 w-[18px]" aria-hidden="true">
          <path d="M0 0h18v10H0z" fill="#e8eaf6" /><path d="M0 5h18M9 0v7M3 3h4M12 3h4M3 8h12" stroke="#4d5490" />
        </svg>
        Global
      </div>
    </div>
  );
}
